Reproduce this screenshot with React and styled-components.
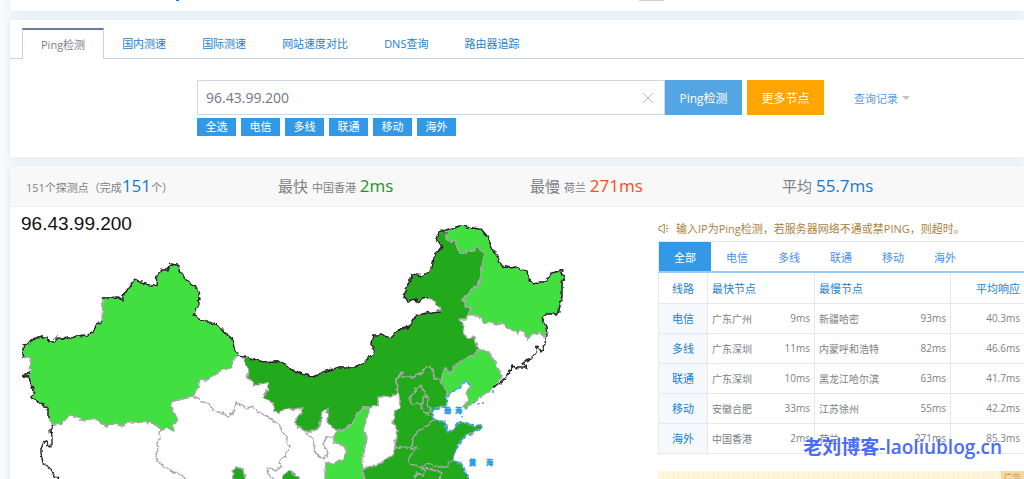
import React, { useState } from 'react'

import styled, { createGlobalStyle } from 'styled-components'

const tabs = ['Ping检测', '国内测速', '国际测速', '网站速度对比', 'DNS查询', '路由器追踪']
const lines = ['全选', '电信', '多线', '联通', '移动', '海外']
const filters = ['全部', '电信', '多线', '联通', '移动', '海外']

const rows = [
    { line: '电信', fast: '广东广州', fastMs: '9ms', slow: '新疆哈密', slowMs: '93ms', avg: '40.3ms' },
    { line: '多线', fast: '广东深圳', fastMs: '11ms', slow: '内蒙呼和浩特', slowMs: '82ms', avg: '46.6ms' },
    { line: '联通', fast: '广东深圳', fastMs: '10ms', slow: '黑龙江哈尔滨', slowMs: '63ms', avg: '41.7ms' },
    { line: '移动', fast: '安徽合肥', fastMs: '33ms', slow: '江苏徐州', slowMs: '55ms', avg: '42.2ms' },
    { line: '海外', fast: '中国香港', fastMs: '2ms', slow: '荷兰', slowMs: '271ms', avg: '85.3ms' },
]

const LIGHT = '#42df40'
const DARK = '#24aa1f'

// provinces with a result, filled by response time
const provinces = [
    { name: 'xinjiang', fill: LIGHT, d: 'M22 353L24 345 28 344 31 340 36 339 41 337 48 337 49 342 54 342 59 337 62 339 67 338 72 338 77 336 85 335 93 332 96 326 99 324 102 321 103 300 102 298 110 298 117 297 120 299 123 301 123 296 129 287 135 279 142 283 152 286 156 285 157 274 161 270 168 270 171 264 180 266 179 270 183 276 187 281 195 286 198 292 200 298 199 304 197 308 194 316 202 321 213 323 221 328 227 335 232 337 234 348 238 356 233 360 232 367 222 369 215 375 207 380 200 379 198 387 193 397 182 399 171 402 173 410 178 420 173 424 174 432 168 428 162 430 152 423 143 422 135 422 128 422 122 426 113 423 107 426 100 423 93 418 85 421 78 418 71 415 67 418 62 424 53 425 48 418 48 408 40 403 36 400 32 397 34 391 32 387 29 377 22 376 30 373 31 359 23 357Z' },
    { name: 'neimenggu', fill: DARK, d: 'M244 358L250 358 263 362 275 361 285 364 290 369 302 374 313 377 323 372 337 368 353 368 363 363 375 352 371 345 373 335 382 335 390 338 398 330 410 327 415 317 427 313 441 311 435 302 428 297 422 298 420 302 414 299 408 302 404 296 412 274 422 276 432 269 434 257 442 246 436 239 439 232 447 231 446 239 451 242 455 241 460 253 473 251 477 247 484 253 481 267 481 275 478 288 475 286 463 301 468 308 473 307 468 312 467 319 459 319 463 325 464 335 467 339 474 337 475 343 478 347 479 350 475 355 467 358 457 363 449 373 445 367 443 373 441 380 434 379 433 368 426 366 422 373 412 378 406 376 402 377 402 372 396 380 397 393 392 397 378 397 378 405 370 408 363 408 357 415 348 428 342 431 333 428 327 422 328 409 322 412 319 427 313 431 304 431 296 424 296 417 302 413 303 407 296 410 290 408 283 409 280 413 274 410 272 403 263 397 269 388 267 383 263 383 253 386 252 381 247 377 249 372Z' },
    { name: 'heilongjiang', fill: LIGHT, d: 'M447 231L450 229 463 225 473 228 480 229 487 237 493 250 498 258 502 266 510 268 517 267 521 270 527 271 528 278 533 284 539 282 545 282 548 277 553 273 563 269 562 274 565 278 562 283 562 297 558 314 547 314 542 318 546 327 545 337 539 333 533 334 527 339 522 329 517 334 512 329 507 328 503 323 497 325 490 323 483 322 477 315 468 315 468 312 473 307 468 308 463 301 475 286 478 288 481 275 481 267 484 253 477 247 473 251 460 253 455 241 451 242 446 239Z' },
    { name: 'liaoning', fill: LIGHT, d: 'M479 350L482 349 486 353 490 353 497 365 502 377 493 389 480 397 465 409 463 407 468 400 466 393 471 385 465 382 457 390 448 395 441 382 443 373 445 367 449 373 457 363 467 358 475 355Z' },
    { name: 'huabei', fill: DARK, d: 'M441 380L448 395 447 403 446 407 435 408 432 412 435 420 445 422 447 431 453 430 457 423 467 423 473 426 481 425 480 430 470 434 463 438 458 445 452 460 463 465 468 479 468 482 366 482 362 470 380 463 393 455 395 447 395 440 398 430 393 422 395 411 400 408 400 400 398 393 396 380 402 372 402 377 406 376 412 378 422 373 426 366 433 368 434 379Z' },
    { name: 'shaanxi', fill: LIGHT, d: 'M370 408L368 412 367 420 363 430 366 437 365 448 363 457 362 470 366 482 325 482 325 472 326 463 333 464 337 461 344 459 346 447 333 442 334 436 338 429 342 431 348 428 357 415 363 408Z' },
    { name: 'sichuan', fill: DARK, d: 'M233 482L234 476 232 471 238 467 243 470 246 482Z' },
    { name: 'sichuan-east', fill: DARK, d: 'M282 482L284 474 289 471 292 473 299 477 300 482Z' },
]

const innerBorders = [
    'M162 430L159 432 160 438 157 443 158 450 155 456 158 461 162 465 170 470 177 473 187 479',
    'M193 398L199 398 201 402 205 402 210 405 213 411 223 413 228 416 234 412 236 403 245 407 247 409 253 407 263 415 271 419 280 425 283 431 286 437 289 447 286 455 280 461 281 467 276 471 267 467 268 474 273 479',
    'M304 431L313 440 315 452 323 460 328 453 323 445 326 437 333 437',
    'M420 386L425 392 427 396 423 397 423 404 417 404 412 404 409 398 414 393 416 388Z',
    'M423 397L429 398 427 404 431 410 429 414 423 413 422 405',
    'M394 446L402 448 412 448 413 438 417 432 422 428 429 425 435 420',
    'M412 448L418 447 412 453 408 460 410 464 422 467 430 463 435 467 447 467 449 463 452 460',
    'M422 467L425 471 423 475 416 474 414 479M425 468L433 470 442 473 440 479',
]

const outline = [
    'M48 418L48 408 40 403 36 400 32 397 34 391 32 387 29 377 22 376 30 373',
    'M23 357L22 353 24 345 28 344 31 340 36 339 41 337 48 337 49 342 54 342 59 337 62 339 67 338 72 338 77 336 85 335 93 332 96 326 99 324 102 321',
    'M102 298L110 298 117 297 120 299 123 301 123 296 129 287 135 279 142 283 152 286 156 285 157 274 161 270 168 270 171 264 180 266 179 270 183 276 187 281 195 286 198 292 200 298 199 304 197 308 194 316 202 321 213 323 221 328 227 335 232 337 234 348 238 356 250 358 263 362 275 361 285 364 290 369 302 374 313 377 323 372 337 368 353 368 363 363 375 352 371 345 373 335 382 335 390 338 398 330 410 327 415 317 427 313 441 311',
    'M428 297L422 298 420 302 414 299 408 302 404 296 412 274 422 276 432 269 434 257 442 246 436 239 439 232 450 229 463 225 473 228 480 229 487 237 493 250 498 258 502 266 510 268 517 267 521 270 527 271 528 278 533 284 539 282 545 282 548 277 553 273 563 269 562 274 565 278 562 283 562 297 558 314 547 314 542 318 546 327 547 335 545 344 542 352 537 346 536 353 530 359 523 362 526 368 519 368 512 366 507 377 500 383 493 389',
    'M53 425L50 430 51 437 51 447 48 446 47 442 43 443 41 448 41 453 43 464 50 468 53 474 58 479',
]

const coast = [
    'M471 385L465 382 457 390 448 395 447 403 446 407M440 409L435 408 432 412 435 420 445 422 447 431 453 430 457 423 467 423 473 426 481 425 480 430 475 432',
    'M470 434L463 438 458 445 452 460 463 465 468 479',
]

function ChinaMap({ ip }) {
    return (
        <MapSvg viewBox='10 207 570 272' role='img' aria-label={ip}>
            <defs>
                {/* breaks up the straight segments of the borders */}
                <filter id='rough' x='0' y='0' width='100%' height='100%'>
                    <feTurbulence type='fractalNoise' baseFrequency='0.2' numOctaves='2' seed='4' />
                    <feDisplacementMap in='SourceGraphic' scale='5' xChannelSelector='R' yChannelSelector='G' />
                </filter>
            </defs>
            <text x='21' y='230' fontFamily='"Liberation Sans", sans-serif' fontSize='19' fill='#111'>{ip}</text>
            <g filter='url(#rough)' strokeWidth='1.4' strokeLinejoin='round'>
                <g stroke='#a9a9a9'>
                    {provinces.map((p) => <path key={p.name} d={p.d} fill={p.fill} />)}
                    {innerBorders.map((d) => <path key={d} d={d} fill='none' />)}
                </g>
                <g fill='none' stroke='#222'>
                    {outline.map((d) => <path key={d} d={d} />)}
                </g>
                <g fill='none' stroke='#35a5e8' strokeDasharray='5 1'>
                    {coast.map((d) => <path key={d} d={d} />)}
                    <path d='M473 401h3M480 398h2M477 404h2M482 403h2M461 416h2M492 392h2' />
                </g>
            </g>
            <g fill='#1a9ce4' stroke='#1a9ce4' strokeWidth='0.4' fontSize='7' fontWeight='700' fontFamily='"Noto Sans CJK SC", sans-serif'>
                <text x='444' y='413'>渤</text>
                <text x='455' y='413'>海</text>
                <text x='469' y='465'>黄</text>
                <text x='486' y='465'>海</text>
            </g>
        </MapSvg>
    )
}

export default function App() {

    const [ip, setIp] = useState('96.43.99.200')
    const [filter, setFilter] = useState('全部')

    return (
        <Page>
            <GlobalStyle />
            <TopCard>
                <LogoTail />
                <MenuTail />
            </TopCard>

            <Card>
                <TabBar>
                    {
                        tabs.map((tab, index) => {
                            return <Tab href='#' $active={index === 0} key={tab}>{tab}</Tab>
                        })
                    }
                </TabBar>
                <SearchArea>
                    <SearchRow>
                        <InputBox>
                            <input aria-label='IP' value={ip} onChange={(e) => setIp(e.target.value)} />
                            <ClearButton type='button' aria-label='清空' onClick={() => setIp('')}>
                                <svg width='12' height='12' viewBox='0 0 12 12'>
                                    <path d='M1 1L11 11M11 1L1 11' stroke='#bbb' fill='none' />
                                </svg>
                            </ClearButton>
                        </InputBox>
                        <ActionButton type='button'>Ping检测</ActionButton>
                        <MoreButton type='button'>更多节点</MoreButton>
                        <History href='#'>查询记录</History>
                    </SearchRow>
                    <Tags>
                        {lines.map((item) => <Tag type='button' key={item}>{item}</Tag>)}
                    </Tags>
                </SearchArea>
            </Card>

            <Card>
                <Stats>
                    <Stat><small>151个探测点（完成</small><Num $color='#1478cd'>151</Num><small>个）</small></Stat>
                    <Stat>最快 <small>中国香港</small> <Num $color='#1f941b'>2ms</Num></Stat>
                    <Stat>最慢 <small>荷兰</small> <Num $color='#ff4a17'>271ms</Num></Stat>
                    <Stat>平均 <Num $color='#1478cd'>55.7ms</Num></Stat>
                </Stats>
                <Result>
                    <MapBox>
                        <ChinaMap ip='96.43.99.200' />
                    </MapBox>
                    <Side>
                        <Notice>
                            <svg width='11' height='11' viewBox='0 0 11 11' fill='none' stroke='#b08a48'>
                                <path d='M1 3.5H3L6.3 1V10L3 7.5H1ZM8 3.5L10 2M8 5.5H10.5M8 7.5L10 9' />
                            </svg>
                            输入IP为Ping检测，若服务器网络不通或禁PING，则超时。
                        </Notice>
                        <Filters>
                            {
                                filters.map((item) => {
                                    return <Filter type='button' $active={item === filter} onClick={() => setFilter(item)} key={item}>{item}</Filter>
                                })
                            }
                        </Filters>
                        <Table>
                            <colgroup>
                                <col width='49' />
                                <col width='62' />
                                <col width='45' />
                                <col width='86' />
                                <col width='50' />
                                <col />
                            </colgroup>
                            <thead>
                                <tr>
                                    <th scope='col'>线路</th>
                                    <th scope='col' colSpan='2'>最快节点</th>
                                    <th scope='col' colSpan='2'>最慢节点</th>
                                    <th scope='col'>平均响应</th>
                                </tr>
                            </thead>
                            <tbody>
                                {
                                    rows.map((row) => {
                                        return <tr key={row.line}>
                                            <th scope='row'>{row.line}</th>
                                            <td>{row.fast}</td>
                                            <Ms>{row.fastMs}</Ms>
                                            <td>{row.slow}</td>
                                            <Ms>{row.slowMs}</Ms>
                                            <Ms>{row.avg}</Ms>
                                        </tr>
                                    })
                                }
                            </tbody>
                        </Table>
                        <Ad><span>广告</span></Ad>
                    </Side>
                </Result>
            </Card>
            <Watermark>老刘博客-laoliublog.cn</Watermark>
        </Page>
    )
}

const GlobalStyle = createGlobalStyle`
    * {
        box-sizing: border-box;
    }

    body {
        margin: 0;
        background: #f9fafc;
        color: #7b8185;
        font-family: "Open Sans", "Noto Sans CJK SC", sans-serif;
        font-size: 11px;
    }

    button, input {
        margin: 0;
        padding: 0;
        border: 0;
        border-radius: 0;
        font: inherit;
    }

    a {
        text-decoration: none;
    }
`

const Page = styled.div`
    position: relative;
    display: flex;
    flex-direction: column;
    gap: 9px;
    height: 100vh;
    padding-left: 10px;
    overflow: hidden;
`

const Card = styled.section`
    flex: none;
    background: #fff;
    border-radius: 2px 0 0 2px;
    box-shadow: 0 0 10px #d3e3f2;
`

const TopCard = styled(Card)`
    display: flex;
    align-items: flex-start;
    height: 11px;
    padding-left: 166px;
`

const LogoTail = styled.div`
    width: 3px;
    height: 1px;
    background: #1478cd;
`

const MenuTail = styled.div`
    width: 25px;
    height: 1px;
    margin-left: 460px;
    background: #ccc;
`

const TabBar = styled.nav`
    display: flex;
    height: 39px;
    padding: 8px 0 0 12px;
    border-bottom: 1px solid #c3d3e2;
`

const Tab = styled.a`
    height: 31px;
    padding: 0 18px;
    line-height: 32px;
    color: #1c7fcf;

    ${({ $active }) => $active && `
        line-height: 29px;
        color: #777f8c;
        background: #fff;
        border: 1px solid #c3d3e2;
        border-top: 2px solid #6b7a9e;
        border-bottom: 0;
    `}
`

const SearchArea = styled.div`
    padding: 21px 114px 21px 187px;
`

const SearchRow = styled.div`
    display: flex;
    align-items: stretch;
    height: 35px;
`

const InputBox = styled.div`
    display: flex;
    flex: 1;
    border: 1px solid #d0d8e6;

    input {
        flex: 1;
        min-width: 0;
        padding-left: 8px;
        color: #6f7887;
        font-size: 14px;
        outline: 0;
    }
`

const ClearButton = styled.button`
    width: 32px;
    background: none;
    line-height: 0;
`

const ActionButton = styled.button`
    width: 77px;
    background: #54a5e3;
    color: #fff;
    font-size: 12px;
`

const MoreButton = styled(ActionButton)`
    margin-left: 5px;
    background: #ffa502;
`

const History = styled.a`
    display: flex;
    align-items: center;
    gap: 4px;
    margin-left: 30px;
    color: #5b9bea;

    &::after {
        content: '';
        border: 4px solid transparent;
        border-top-color: #c4c4c4;
        border-bottom: 0;
    }
`

const Tags = styled.div`
    display: flex;
    gap: 5px;
    margin-top: 3px;
`

const Tag = styled.button`
    width: 39px;
    height: 18px;
    background: #3399e6;
    color: #fff;
    line-height: 18px;
`

const Stats = styled.div`
    display: grid;
    grid-template-columns: 1fr 1fr 1fr 242px;
    height: 41px;
    padding-left: 16px;
    background: #f8f8f8;
    border-bottom: 1px solid #eee;
`

const Stat = styled.div`
    font-size: 15px;
    line-height: 39px;
    white-space: nowrap;

    small {
        font-size: 11px;
    }
`

const Num = styled.span`
    color: ${({ $color }) => $color};
    font-size: 17px;
`

const Result = styled.div`
    display: flex;
`

const MapBox = styled.div`
    flex: 1;
    min-width: 0;
`

const MapSvg = styled.svg`
    display: block;
    width: 570px;
    height: 272px;
`

const Side = styled.aside`
    width: 366px;
`

const Notice = styled.p`
    display: flex;
    align-items: center;
    gap: 7px;
    height: 34px;
    margin: 0;
    padding-top: 8px;
    color: #a9823f;
    white-space: nowrap;
`

const Filters = styled.div`
    display: flex;
    height: 32px;
    border-top: 1px solid #e8e8e8;
    border-left: 1px solid #e8e8e8;
    border-bottom: 2px solid #9ccbf1;
`

const Filter = styled.button`
    width: 52px;
    background: ${({ $active }) => ($active ? '#3399e6' : '#fff')};
    color: ${({ $active }) => ($active ? '#fff' : '#4a90ee')};
`

const Table = styled.table`
    width: 100%;
    table-layout: fixed;
    border-collapse: collapse;
    font-size: 10px;

    th, td {
        height: 30px;
        padding: 0 4px;
        border-bottom: 1px solid #e8e8e8;
        text-align: left;
        white-space: nowrap;
    }

    th {
        color: #1c7fcf;
        font-size: 11px;
        font-weight: 400;
        border-right: 1px solid #e8e8e8;
    }

    th:first-child {
        border-left: 1px solid #e8e8e8;
        text-align: center;
    }

    thead th:last-child {
        border-right: 0;
        text-align: right;
    }

    tbody th {
        background: #f5f9fd;
    }
`

const Ms = styled.td`
    && {
        text-align: right;
        border-right: 1px solid #e8e8e8;
    }

    &&:last-child {
        border-right: 0;
    }
`

const Ad = styled.div`
    display: flex;
    justify-content: flex-end;
    height: 60px;
    margin-top: 17px;
    background: repeating-linear-gradient(90deg, #fdf1d3 0 1px, #fef5dc 1px 5px);

    span {
        width: 23px;
        height: 16px;
        background: #fbd79c;
        color: #c0a070;
        font-size: 9px;
        line-height: 14px;
        text-align: center;
    }
`

const Watermark = styled.div`
    position: absolute;
    right: 22px;
    bottom: 18px;
    color: #4a6cf7;
    font-size: 19px;
    font-weight: 600;
    line-height: 28px;
`
